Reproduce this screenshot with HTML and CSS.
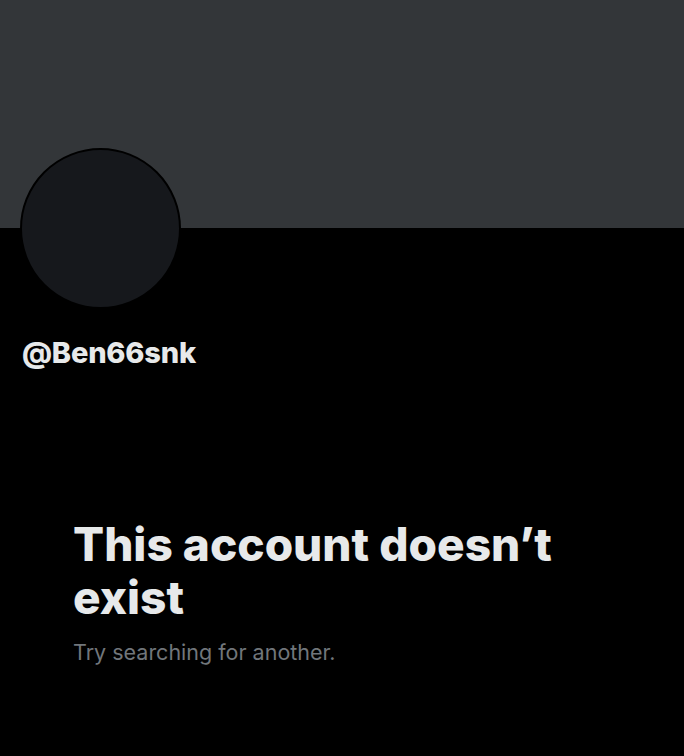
FILE: index.html
```html
<!DOCTYPE html>
<html lang="en">
<head>
  <meta charset="UTF-8">
  <meta name="viewport" content="width=device-width, initial-scale=1.0">
  <title>Profile / X</title>
  <link rel="stylesheet" href="styles.css">
</head>
<body>
  <div class="banner"></div>

  <div class="profile">
    <div class="avatar"></div>
    <div class="handle">@Ben66snk</div>
  </div>

  <div class="empty-state">
    <h1>This account doesn’t exist</h1>
    <p>Try searching for another.</p>
  </div>
</body>
</html>
```

FILE: styles.css
```css
body {
  font-family: 'Inter', 'Noto Sans', sans-serif;
  background-color: #000000;
  margin: 0;
  padding: 0;
  color: #e7e9ea;
}
.banner {
  height: 228px;
  background-color: #333639;
}
.profile {
  padding: 0 20px;
}
.avatar {
  width: 157px;
  height: 157px;
  margin-top: -80px;
  border: 2px solid #000000;
  border-radius: 50%;
  background-color: #16181c;
}
.handle {
  margin-top: 26px;
  padding-left: 2px;
  font-size: 29px;
  font-weight: 800;
  line-height: 36px;
  letter-spacing: -0.2px;
}
.empty-state {
  padding: 147px 73px 0;
}
.empty-state h1 {
  margin: 0;
  font-size: 46px;
  font-weight: 800;
  line-height: 53px;
}
.empty-state p {
  margin: 13px 0 0;
  font-size: 21.5px;
  line-height: 30px;
  color: #71767b;
}
```
